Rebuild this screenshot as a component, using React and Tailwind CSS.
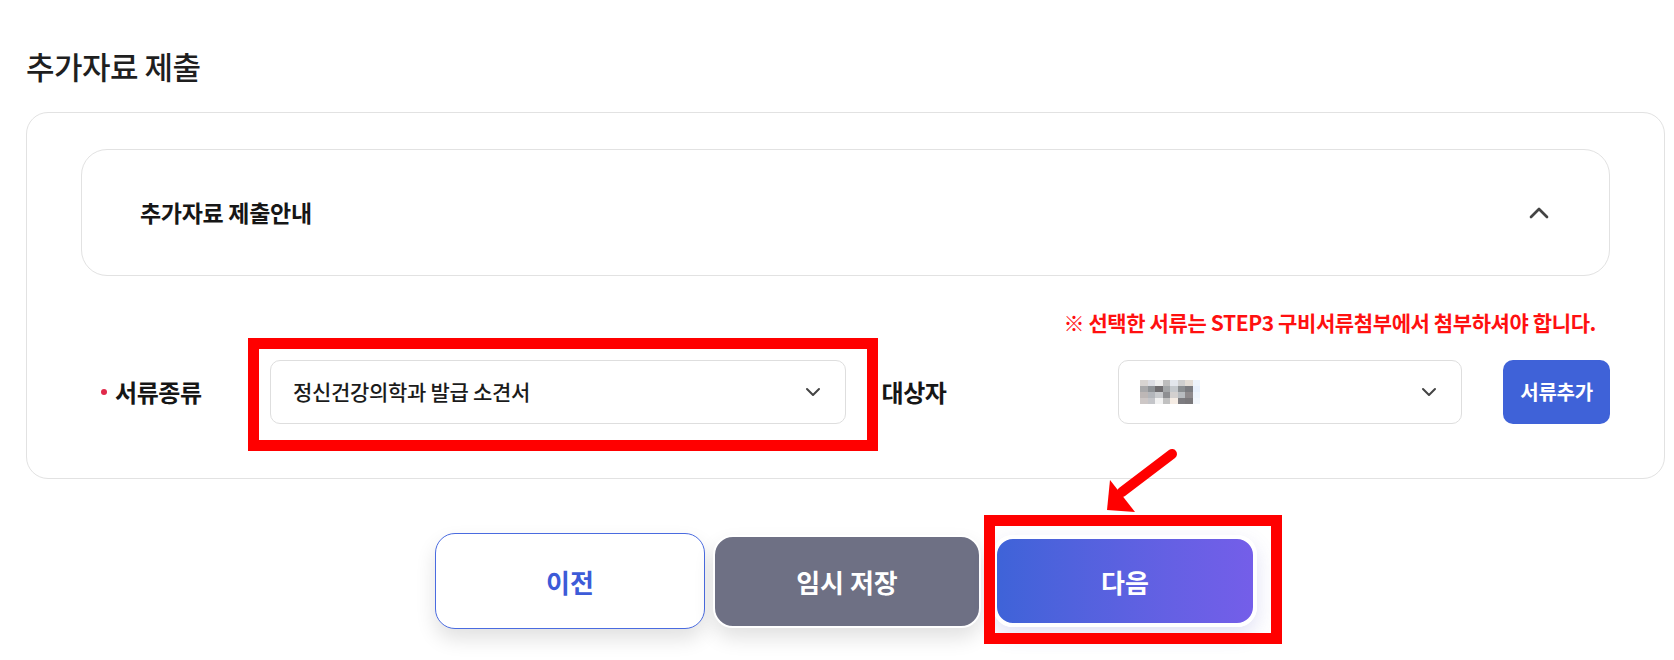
import { ChevronDown, ChevronUp } from "lucide-react";

const FONT = { fontFamily: '"Noto Sans CJK KR", "Noto Sans", sans-serif' };

// blurred name cells (mosaic)
const mosaic = [
  ["#d8d4d2", "#dcdde3", "#eeeeee", "#bdbdbd", "#e3e6ec", "#cfcfcf", "#e3ddd6", "#eef4fb"],
  ["#a9a9ab", "#8f9397", "#6f6d70", "#a3a6a8", "#c4c8cc", "#8b8f92", "#7b7c80", "#e8f0fb"],
  ["#bdb7b6", "#b3b6bb", "#c9cbce", "#8e8f92", "#d3d0cf", "#b8bcc0", "#8e8a8c", "#eef4fb"],
  ["#cdc7c6", "#c4c5c9", "#f2f2f2", "#c1c1c1", "#f5ece4", "#7d7c80", "#7a787b", "#f3f7fc"],
];

function SelectBox({ className = "", children }) {
  return (
    <div
      className={`flex items-center justify-between h-[64px] rounded-[10px] border border-[#dedede] bg-white ${className}`}
    >
      {children}
    </div>
  );
}

export default function App() {
  return (
    <div className="relative w-[1674px] h-[660px] bg-white overflow-hidden" style={FONT}>
      <div className="pl-[26px] pt-[45px]">
        <h2 className="text-[31px] leading-[42px] font-medium text-[#1f1f1f] tracking-[-0.5px]">
          추가자료 제출
        </h2>

        {/* Card */}
        <div className="mt-[25px] w-[1639px] rounded-[22px] border border-[#e2e2e2] bg-white pt-[36px] pb-[54px] px-[54px]">
          {/* Accordion */}
          <div className="flex items-center justify-between h-[127px] rounded-[26px] border border-[#e2e2e2] pl-[58px] pr-[54px]">
            <span className="text-[23px] font-bold text-[#161616] tracking-[-0.3px]">
              추가자료 제출안내
            </span>
            <ChevronUp size={32} strokeWidth={2} className="text-[#444]" />
          </div>

          <p className="mt-[32px] pr-[14px] text-right text-[21px] leading-[28px] font-bold text-[#ff1010] tracking-[-0.4px]">
            ※ 선택한 서류는 STEP3 구비서류첨부에서 첨부하셔야 합니다.
          </p>

          {/* Row */}
          <div className="mt-[24px] flex items-center pl-[20px]">
            <div className="flex items-center w-[169px]">
              <span className="w-[6px] h-[6px] rounded-full bg-[#e0294a] mr-[8px]" />
              <span className="text-[24px] font-bold text-[#161616] tracking-[-0.4px]">서류종류</span>
            </div>
            <SelectBox className="w-[577px] pl-[22px] pr-[20px]">
              <span className="text-[21px] font-medium text-[#1b1b1b] tracking-[-0.3px]">
                정신건강의학과 발급 소견서
              </span>
              <ChevronDown size={24} strokeWidth={2} className="text-[#444]" />
            </SelectBox>
            <span className="ml-[35px] w-[237px] text-[24px] font-bold text-[#161616] tracking-[-0.4px]">
              대상자
            </span>
            <SelectBox className="w-[344px] pl-[21px] pr-[20px]">
              <div className="grid grid-cols-8">
                {mosaic.flat().map((c, i) => (
                  <span key={i} className="w-[7.5px] h-[6px]" style={{ backgroundColor: c }} />
                ))}
              </div>
              <ChevronDown size={24} strokeWidth={2} className="text-[#444]" />
            </SelectBox>
            <button className="ml-[41px] w-[107px] h-[64px] rounded-[10px] bg-[#3f62d8] text-white text-[20px] font-bold tracking-[-0.3px]">
              서류추가
            </button>
          </div>
        </div>
      </div>

      {/* Bottom buttons */}
      <div className="mt-[54px] flex items-center pl-[435px]">
        <button className="w-[270px] h-[96px] rounded-[20px] border border-[#4a6be0] bg-white text-[26px] font-bold text-[#3d5bd8] shadow-[0_10px_20px_rgba(0,0,0,0.12)]">
          이전
        </button>
        <button className="ml-[8px] w-[268px] h-[93px] rounded-[20px] border-2 border-white bg-[#6e7084] text-[26px] font-bold text-white shadow-[0_10px_20px_rgba(0,0,0,0.12)]">
          임시 저장
        </button>
        <button className="ml-[12px] w-[264px] h-[92px] rounded-[20px] border-[4px] border-white bg-gradient-to-r from-[#3e63d8] to-[#745ee9] text-[26px] font-bold text-white shadow-[0_8px_20px_rgba(90,90,200,0.18)]">
          다음
        </button>
      </div>

      {/* Annotations */}
      <div className="absolute left-[248px] top-[338px] w-[630px] h-[113px] border-[11px] border-[#ff0000]" />
      <div className="absolute left-[984px] top-[515px] w-[298px] h-[129px] border-[11px] border-[#ff0000]" />
      <svg className="absolute left-[1100px] top-[444px]" width="90" height="80" viewBox="0 0 90 80">
        <path d="M72 10 L22 48" stroke="#ff0000" strokeWidth="10" strokeLinecap="round" fill="none" />
        <path d="M7 66 L10 36 L35 68 Z" fill="#ff0000" />
      </svg>
    </div>
  );
}
